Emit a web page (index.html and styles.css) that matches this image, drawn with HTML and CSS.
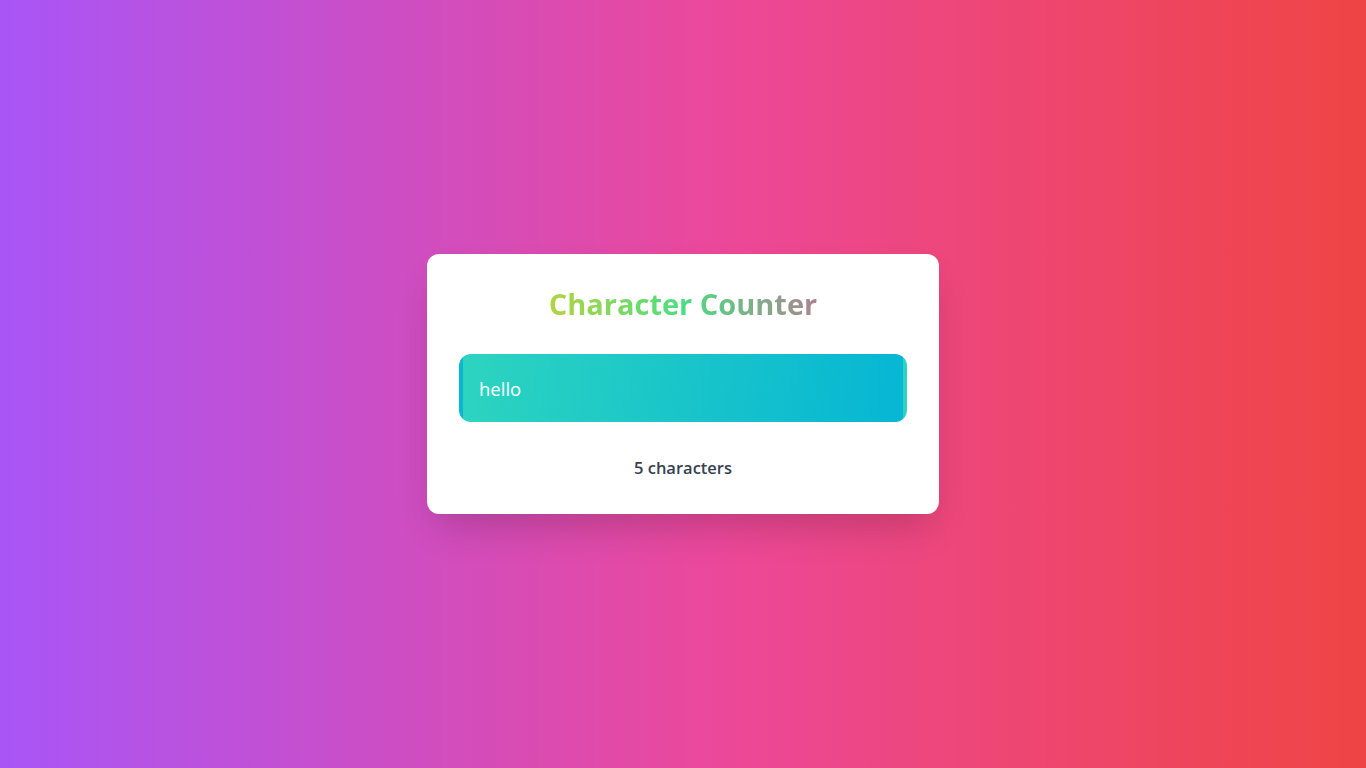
FILE: index.html
```html
<!DOCTYPE html>
<html lang="en">
<head>
<meta charset="utf-8">
<title>Character Counter</title>
<link rel="stylesheet" href="styles.css">
</head>
<body>
  <main class="card">
    <h1 class="title">Character Counter</h1>
    <input class="field" type="text" value="hello" aria-label="Text">
    <p class="count">5 characters</p>
  </main>
</body>
</html>
```
FILE: styles.css
```css
* { box-sizing: border-box; }
html, body { height: 100%; }
body {
  margin: 0;
  min-height: 100vh;
  display: flex;
  align-items: center;
  justify-content: center;
  background: linear-gradient(90deg, #a855f7 0%, #ec4899 53%, #ef4444 100%);
  font-family: "Open Sans", "Noto Sans", sans-serif;
}
.card {
  width: 512px;
  padding: 32px;
  background: #ffffff;
  border-radius: 12px;
  box-shadow: 0 20px 40px -10px rgba(0, 0, 0, 0.2);
  display: flex;
  flex-direction: column;
}
.title {
  margin: 0 0 32px;
  font-size: 29px;
  line-height: 36px;
  font-weight: 700;
  text-align: center;
  background: linear-gradient(90deg, #facc15 0%, #4ade80 50%, #ec4899 100%);
  -webkit-background-clip: text;
  background-clip: text;
  color: transparent;
}
.field {
  display: block;
  width: 100%;
  height: 68px;
  margin: 0;
  padding: 16px;
  border: 4px solid transparent;
  border-radius: 12px;
  background: linear-gradient(100deg, #2dd4bf 0%, #06b6d4 100%);
  background-origin: padding-box;
  background-clip: border-box;
  color: #ffffff;
  font-family: "Open Sans", "Noto Sans", sans-serif;
  font-size: 18.5px;
  line-height: 28px;
  outline: none;
}
.count {
  margin: 32px 0 0;
  font-size: 16.5px;
  line-height: 28px;
  font-weight: 600;
  text-align: center;
  color: #374151;
}
```
